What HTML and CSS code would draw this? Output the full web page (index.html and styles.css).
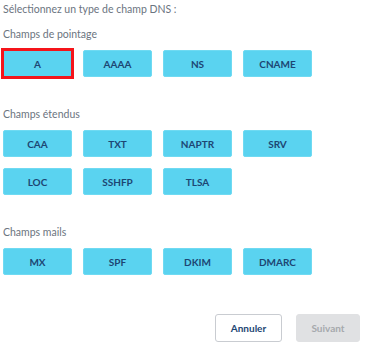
FILE: index.html
```html
<!DOCTYPE html>
<html lang="fr">
<head>
    <meta charset="UTF-8">
    <meta name="viewport" content="width=device-width, initial-scale=1.0">
    <title>Type de champ DNS</title>
    <link rel="stylesheet" href="styles.css">
</head>
<body>
    <div class="dns-picker">
        <p class="intro">Sélectionnez un type de champ DNS :</p>

        <!-- Champs de pointage -->
        <div class="field-group">
            <h2 class="group-title first">Champs de pointage</h2>
            <div class="type-list">
                <button class="type-btn selected">A</button>
                <button class="type-btn">AAAA</button>
                <button class="type-btn">NS</button>
                <button class="type-btn">CNAME</button>
            </div>
        </div>

        <!-- Champs étendus -->
        <div class="field-group">
            <h2 class="group-title">Champs étendus</h2>
            <div class="type-list">
                <button class="type-btn">CAA</button>
                <button class="type-btn">TXT</button>
                <button class="type-btn">NAPTR</button>
                <button class="type-btn">SRV</button>
                <button class="type-btn">LOC</button>
                <button class="type-btn">SSHFP</button>
                <button class="type-btn">TLSA</button>
            </div>
        </div>

        <!-- Champs mails -->
        <div class="field-group">
            <h2 class="group-title">Champs mails</h2>
            <div class="type-list">
                <button class="type-btn">MX</button>
                <button class="type-btn">SPF</button>
                <button class="type-btn">DKIM</button>
                <button class="type-btn">DMARC</button>
            </div>
        </div>

        <div class="actions">
            <button class="btn-cancel">Annuler</button>
            <button class="btn-next" disabled>Suivant</button>
        </div>
    </div>
</body>
</html>
```

FILE: styles.css
```css
body {
    margin: 0;
    font-family: Lato, 'Liberation Sans', sans-serif;
    color: #6b7480;
    background: #ffffff;
}

.dns-picker {
    width: 360px;
    padding: 1px 0 0 3px;
    box-sizing: border-box;
}

.intro {
    margin: 0;
    font-size: 10.5px;
    line-height: 16px;
}

.group-title {
    margin: 0 0 9px 0;
    padding-top: 30px;
    font-size: 10.5px;
    font-weight: normal;
    line-height: 14px;
}

.group-title.first {
    padding-top: 10px;
}

.type-list {
    display: flex;
    flex-wrap: wrap;
    gap: 11px 11px;
    width: 320px;
}

.type-btn {
    width: 69px;
    height: 27px;
    padding: 0;
    background: #5ad3f0;
    border: 1px solid #6fdaf2;
    border-radius: 2px;
    color: #1d4673;
    font-family: Lato, 'Liberation Sans', sans-serif;
    font-size: 10px;
    font-weight: bold;
    cursor: pointer;
}

.type-btn.selected {
    border-radius: 0;
    outline: 3px solid #f5141a;
    outline-offset: -1px;
}

.actions {
    display: flex;
    justify-content: flex-end;
    gap: 14px;
    margin-top: 39px;
}

.btn-cancel,
.btn-next {
    height: 28px;
    border-radius: 3px;
    font-family: Lato, 'Liberation Sans', sans-serif;
    font-size: 10px;
    font-weight: bold;
}

.btn-cancel {
    width: 67px;
    background: #ffffff;
    border: 1px solid #c9ccd1;
    color: #1d4673;
}

.btn-next {
    width: 64px;
    background: #e0e1e3;
    border: 1px solid #e0e1e3;
    color: #a6a9ad;
}
```
